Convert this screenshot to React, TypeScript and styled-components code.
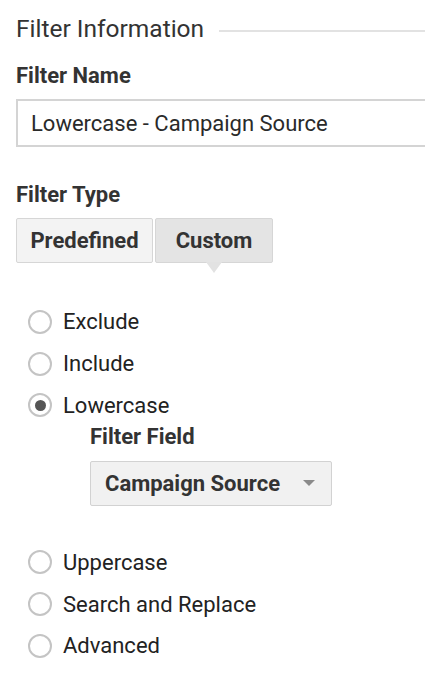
import React, { useState } from 'react'
import styled, { createGlobalStyle } from 'styled-components';

const GlobalStyle = createGlobalStyle`
  body {
    margin: 0;
    background: #fff;
    font-family: Roboto, "Liberation Sans", sans-serif;
    color: #222;
  }
`;

const options = ['Exclude', 'Include', 'Lowercase', 'Uppercase', 'Search and Replace', 'Advanced'];

const App: React.FC = () => {
  const [filterType, setFilterType] = useState('custom');
  const [selected, setSelected] = useState('Lowercase');

  return (
    <>
      <GlobalStyle />
      <Page>
        <Header>
          <h1 className='title'>Filter Information</h1>
          <div className='rule' />
        </Header>

        <Label $top={19.5}>Filter Name</Label>
        <TextBox>Lowercase - Campaign Source</TextBox>

        <Label $top={34.5}>Filter Type</Label>
        <Toggle>
          <ToggleBtn $active={filterType === 'predefined'} $width={137} onClick={() => setFilterType('predefined')}>
            Predefined
          </ToggleBtn>
          <ToggleBtn $active={filterType === 'custom'} $width={118} onClick={() => setFilterType('custom')}>
            Custom
          </ToggleBtn>
        </Toggle>

        <RadioList>
          {options.map((opt) => (
            <React.Fragment key={opt}>
              <RadioRow onClick={() => setSelected(opt)}>
                <Circle $checked={selected === opt} />
                <span>{opt}</span>
              </RadioRow>
              {opt === 'Lowercase' && selected === 'Lowercase' && (
                <Nested>
                  <Label $top={-2}>Filter Field</Label>
                  <Dropdown>
                    <span>Campaign Source</span>
                    <svg width="12" height="6" viewBox="0 0 12 6">
                      <path d="M0 0 L12 0 L6 6 Z" fill="#8a8a8a" />
                    </svg>
                  </Dropdown>
                </Nested>
              )}
            </React.Fragment>
          ))}
        </RadioList>
      </Page>
    </>
  )
}

const Page = styled.div`
  padding: 15px 0 0 16px;
  overflow: hidden;
`;

const Header = styled.div`
  display: flex;
  align-items: center;
  gap: 15px;
  .title {
    margin: 0;
    font-size: 24.5px;
    line-height: 28px;
    font-weight: 400;
    color: #333;
    white-space: nowrap;
  }
  .rule {
    flex: 1;
    height: 2px;
    margin-top: 4px;
    background: #e2e2e2;
  }
`;

const Label = styled.h2<{ $top: number }>`
  margin: ${(p) => p.$top}px 0 10.5px;
  font-size: 22px;
  line-height: 26px;
  font-weight: 700;
  color: #333;
`;

const TextBox = styled.div`
  box-sizing: border-box;
  height: 48px;
  width: 430px;
  display: flex;
  align-items: center;
  padding-left: 13px;
  border: 2px solid #d4d4d4;
  font-size: 22px;
  color: #2a2a2a;
`;

const Toggle = styled.div`
  display: flex;
  gap: 2px;
`;

const ToggleBtn = styled.button<{ $active: boolean; $width: number }>`
  position: relative;
  box-sizing: border-box;
  width: ${(p) => p.$width}px;
  height: 45px;
  padding: 0;
  border: 1px solid #d6d6d6;
  border-radius: 2px;
  background: ${(p) => (p.$active ? '#e4e4e4' : '#f3f3f3')};
  font-family: Roboto, "Liberation Sans", sans-serif;
  font-size: 22px;
  font-weight: 700;
  color: #333;
  cursor: pointer;
  &::after {
    content: '';
    display: ${(p) => (p.$active ? 'block' : 'none')};
    position: absolute;
    left: 50%;
    top: 100%;
    margin-left: -8px;
    border-left: 8px solid transparent;
    border-right: 8px solid transparent;
    border-top: 11px solid #e2e2e2;
  }
`;

const RadioList = styled.div`
  display: flex;
  flex-direction: column;
  margin-top: 38px;
  padding-left: 12px;
`;

const RadioRow = styled.label`
  display: flex;
  align-items: center;
  gap: 11px;
  height: 41.7px;
  font-size: 22px;
  color: #222;
  cursor: pointer;
`;

const Circle = styled.span<{ $checked: boolean }>`
  box-sizing: border-box;
  flex-shrink: 0;
  width: 24px;
  height: 24px;
  border-radius: 50%;
  border: 2px solid #c4c4c4;
  display: flex;
  align-items: center;
  justify-content: center;
  &::after {
    content: '';
    display: ${(p) => (p.$checked ? 'block' : 'none')};
    width: 11px;
    height: 11px;
    border-radius: 50%;
    background: #555;
  }
`;

const Nested = styled.div`
  padding-left: 62px;
  margin-bottom: 36px;
`;

const Dropdown = styled.div`
  box-sizing: border-box;
  width: 242px;
  height: 45px;
  display: flex;
  align-items: center;
  justify-content: space-between;
  padding: 0 16px 0 14px;
  background: #f1f1f1;
  border: 1px solid #d2d2d2;
  border-radius: 2px;
  font-size: 22px;
  font-weight: 700;
  color: #333;
`;

export default App
